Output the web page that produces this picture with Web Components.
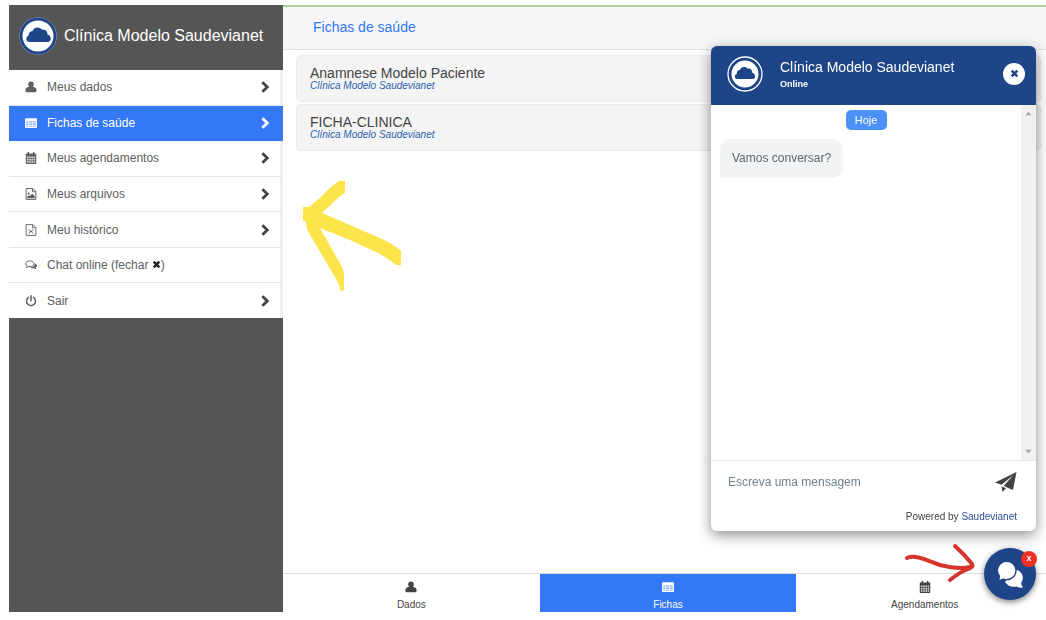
<!DOCTYPE html>
<html lang="pt-BR">
<head>
<meta charset="utf-8">
<title>Fichas de saúde</title>
<style>
  html { background: #fff; }
  body {
    margin: 0; padding: 5px 0 8px 9px; box-sizing: border-box;
    height: 100vh; overflow: hidden;
    font-family: "Liberation Sans", Arial, sans-serif; color: #606060;
  }
</style>
</head>
<body>
<clinic-app></clinic-app>
<script>
const NAVY = '#1d4588';
const CLOUD = 'M10.500 25C8 25 7 23.600 7 22c0-1.800 1-3 2.500-3.500C9 16 11 14.200 13 14.200 14 12 15.800 10.500 18.300 10.500c2 0 3.200.8 4.200 2 2-.3 3.800.4 4.700 1.800.8 1 .9 2 .8 3 2.200.8 3.500 2.400 3.500 4.200 0 2-1.300 3.500-3.500 3.500z';
const ICONS = {
  user: ['0 0 16 16', '<path d="M8 .5c2.300 0 3.800 1.600 3.800 3.800 0 1.300-.5 2.500-1.300 3.300 2.900.4 5 2 5 4.600 0 1.900-1 2.800-2.300 2.800H2.800C1.500 15 .5 14.100.5 12.200c0-2.600 2.100-4.200 5-4.600-.8-.8-1.300-2-1.300-3.300C4.200 2.100 5.700.5 8 .5z"/>'],
  table: ['0 0 16 16', '<path fill-rule="evenodd" d="M1 1.500h14a1 1 0 0 1 1 1v11a1 1 0 0 1-1 1H1a1 1 0 0 1-1-1v-11a1 1 0 0 1 1-1zM1.500 5.500v2h3v-2zM5.500 5.500v2h4v-2zM10.500 5.500v2h4v-2zM1.500 8.500v2h3v-2zM5.500 8.500v2h4v-2zM10.500 8.500v2h4v-2zM1.500 11.500v1.500h3v-1.500zM5.500 11.500v1.500h4v-1.500zM10.500 11.500v1.500h4v-1.500z" /><path d="M1 5h14v9H1z" opacity=".45"/>'],
  calendar: ['0 0 16 16', '<path fill-rule="evenodd" d="M3.500 0h2v2h5V0h2v2H14a1 1 0 0 1 1 1v12a1 1 0 0 1-1 1H2a1 1 0 0 1-1-1V3a1 1 0 0 1 1-1h1.500zM2.500 6v2h2.200V6zM5.500 6v2h2.200V6zM8.500 6v2h2.200V6zM11.500 6v2h2V6zM2.500 9v2.200h2.200V9zM5.500 9v2.200h2.200V9zM8.500 9v2.200h2.200V9zM11.500 9v2.200h2V9zM2.500 12.200v2h2.200v-2zM5.500 12.200v2h2.200v-2zM8.500 12.200v2h2.200v-2zM11.500 12.200v2h2v-2z"/><path d="M2 5h12v10H2z" opacity=".2"/>'],
  image: ['0 0 16 16', '<path d="M1.500.8h9l4 4v10.400h-13zM10 1v4h4" fill="none" stroke="currentColor" stroke-width="1.300"/><circle cx="5" cy="7.500" r="1.400"/><path d="M3 13.500v-2l2-2 1.300 1.300 3.300-3.300 3.400 3v3z"/>'],
  file: ['0 0 16 16', '<path d="M1.500.8h9l4 4v10.400h-13zM10 1v4h4" fill="none" stroke="currentColor" stroke-width="1.200"/><path d="M5 7l2.500 3L5 13M11 7l-2.500 3 2.500 3M6.500 10h3" fill="none" stroke="currentColor" stroke-width="1.200"/>'],
  chats: ['0 0 16 16', '<path d="M6.500 2.500c3 0 5.400 1.600 5.400 3.800S9.500 10 6.500 10c-.6 0-1 0-1.500-.1-1 .7-2 1.100-3.300 1.200.6-.6 1-1.200 1.100-2C1.600 8.400.900 7.400.900 6.300c0-2.200 2.600-3.800 5.600-3.800z" fill="none" stroke="currentColor" stroke-width="1.300"/><path d="M13.200 5.500c1.600.7 2.800 1.900 2.800 3.300 0 1.200-.8 2.200-1.900 2.800.1.800.5 1.400 1.100 2-1.300-.1-2.400-.6-3.300-1.200-2.100.3-4.200-.1-5.600-1.200 3.700 0 6.900-1.800 6.900-5.700z"/>'],
  power: ['0 0 16 16', '<path d="M4.700 3.200a6 6 0 1 0 6.600 0M8 1v6.500" fill="none" stroke="currentColor" stroke-width="2" stroke-linecap="round"/>'],
  chevron: ['0 0 16 16', '<path d="M4.500 1.700L11 8l-6.500 6.300" fill="none" stroke="currentColor" stroke-width="3.800"/>'],
  cross: ['0 0 16 16', '<path d="M3 3l10 10M13 3L3 13" fill="none" stroke="currentColor" stroke-width="4.500"/>'],
  up: ['0 0 16 16', '<path d="M1 12l7-8 7 8z"/>'],
  down: ['0 0 16 16', '<path d="M1 4l7 8 7-8z"/>'],
  plane: ['0 0 22 20', '<path d="M21.500 0L18 18l-5-2-4.300-2.200L18.500 3 6.500 12.800 0 10.500zM6.500 14.200l4.500 2L7.500 20z"/>'],
  comments: ['0 0 27 27', `<path d="M18 8.500c4.500.6 7.800 4 7.800 8.200 0 2-.6 3.700-1.600 5.100.2 2 .8 3.500 1.800 4.900-2.500.1-4.700-.3-6.500-1.300-4.500 1.200-9.500-.6-11.500-4.600z"/><path d="M9.700.3c5.200 0 9.400 4 9.400 9.200s-4.200 9.200-9.400 9.200c-1.200 0-2.400-.2-3.400-.6-1.700 1-3.500 1.400-5.500 1.400 1-1.500 1.500-2.900 1.500-4.600C1 13.300.3 11.500.3 9.500.3 4.300 4.500.3 9.700.3z" stroke="${NAVY}" stroke-width="1.500"/>`],
  logo: ['0 0 38 38', `<circle cx="19" cy="19" r="18.800" fill="#8398ba"/><circle cx="19" cy="19" r="18.300" fill="${NAVY}"/><circle cx="19" cy="19" r="15.500" fill="#fff"/><path d="${CLOUD}" transform="translate(.3 0)" fill="${NAVY}"/>`],
  logoring: ['0 0 38 38', `<circle cx="19" cy="19" r="17" fill="${NAVY}" stroke="#fff" stroke-width="1.300"/><circle cx="19" cy="19" r="13.500" fill="#fff"/><path d="${CLOUD}" transform="translate(3 3.300) scale(.83)" fill="${NAVY}"/>`],
};

/* Base class: renders the subclass markup into an open shadow root. */
class Base extends HTMLElement {
  connectedCallback() {
    if (this.shadowRoot) return;
    const t = document.createElement('template');
    t.innerHTML = `<style>*{box-sizing:border-box} a{color:inherit;text-decoration:none} button{border:0;padding:0;cursor:pointer;font:inherit}</style>${this.render()}`;
    this.attachShadow({ mode: 'open' }).append(t.content.cloneNode(true));
  }
}

class AppIcon extends Base {
  render() {
    const [box, body] = ICONS[this.getAttribute('name')];
    return `<style>:host{display:inline-block;width:12px;height:12px;flex:none}
      svg{display:block;width:100%;height:100%;fill:currentColor}</style>
      <svg viewBox="${box}" aria-hidden="true">${body}</svg>`;
  }
}

class MenuItem extends Base {
  render() {
    return `<style>
      :host{display:block;flex:1;background:#fff;color:#606060;border-bottom:1px solid #e4e4e4;border-right:3px solid #efefef;font-size:12px}
      :host(:last-child){border-bottom:0}
      :host([active]){background:#3478f6;color:#fff;border-color:#3478f6}
      a{display:flex;align-items:center;height:100%;padding:0 9px 0 16px}
      .label{flex:1;padding-left:10px}
      .go{color:#444} :host([active]) .go{color:#fff}
    </style>
    <a href="#"><app-icon name="${this.getAttribute('icon')}"></app-icon>
      <span class="label"><slot></slot></span>
      ${this.hasAttribute('plain') ? '' : '<app-icon class="go" name="chevron"></app-icon>'}</a>`;
  }
}

class SideBar extends Base {
  render() {
    return `<style>
      :host{display:flex;flex-direction:column;width:274px;flex:none;background:#555}
      header{display:flex;align-items:center;gap:7px;height:65px;padding:0 0 3px 10px;color:#fff;font-size:16px;white-space:nowrap}
      header app-icon{width:38px;height:38px}
      nav{display:flex;flex-direction:column;height:248px}
      .x{width:9px;height:9px;color:#222}
    </style>
    <header><app-icon name="logo"></app-icon><span>Clínica Modelo Saudevianet</span></header>
    <nav>
      <menu-item icon="user">Meus dados</menu-item>
      <menu-item icon="table" active>Fichas de saúde</menu-item>
      <menu-item icon="calendar">Meus agendamentos</menu-item>
      <menu-item icon="image">Meus arquivos</menu-item>
      <menu-item icon="file">Meu histórico</menu-item>
      <menu-item icon="chats" plain>Chat online (fechar <app-icon class="x" name="cross"></app-icon>)</menu-item>
      <menu-item icon="power">Sair</menu-item>
    </nav>`;
  }
}

class RecordCard extends Base {
  render() {
    return `<style>
      :host{display:block;background:#f4f4f4;border:1px solid #ececec;border-radius:5px}
      a{display:block;height:45px;padding:10px 13px}
      b{display:block;font-weight:400;font-size:14px;line-height:15px;color:#444}
      i{display:block;font-size:10px;line-height:10px;color:#2a62ad}
    </style>
    <a href="#"><b><slot></slot></b><i><slot name="clinic"></slot></i></a>`;
  }
}

class TabItem extends Base {
  render() {
    return `<style>
      :host{display:block;flex:1;color:#444;font-size:10px}
      :host([active]){background:#3478f6;color:#fff}
      a{display:flex;flex-direction:column;align-items:center;gap:6px;padding-top:7px;line-height:12px}
    </style>
    <a href="#"><app-icon name="${this.getAttribute('icon')}"></app-icon><slot></slot></a>`;
  }
}

class MainPane extends Base {
  render() {
    return `<style>
      :host{display:flex;flex-direction:column;flex:1;min-width:0;overflow:hidden;background:#fff;border-top:2px solid #add3a6}
      h1{margin:0;height:43px;padding:0 30px;background:#f7f7f7;border-bottom:1px solid #dedede;font-size:14px;font-weight:400;line-height:40px;color:#3478f6}
      section{flex:1;display:flex;flex-direction:column;gap:2px;padding:5px 5px 0 13px}
      nav{display:flex;height:39px;margin-right:-7px;border-top:1px solid #dedede}
    </style>
    <h1>Fichas de saúde</h1>
    <section>
      <record-card>Anamnese Modelo Paciente<span slot="clinic">Clínica Modelo Saudevianet</span></record-card>
      <record-card>FICHA-CLINICA<span slot="clinic">Clínica Modelo Saudevianet</span></record-card>
    </section>
    <nav>
      <tab-item icon="user">Dados</tab-item>
      <tab-item icon="table" active>Fichas</tab-item>
      <tab-item icon="calendar">Agendamentos</tab-item>
    </nav>`;
  }
}

class ChatPanel extends Base {
  render() {
    return `<style>
      :host{position:fixed;right:10px;bottom:89px;width:325px;display:flex;flex-direction:column;background:#fff;border-radius:6px;overflow:hidden;box-shadow:0 4px 14px rgba(0,0,0,.45)}
      header{display:flex;align-items:center;height:59px;padding:0 11px 4px 15px;background:${NAVY};color:#fff}
      .logo{width:38px;height:38px}
      .who{flex:1;padding-left:16px}
      .who strong{display:block;font-weight:400;font-size:14px;line-height:20px}
      .who small{display:block;font-size:9px;font-weight:700;line-height:14px}
      .close{display:flex;align-items:center;justify-content:center;width:22px;height:22px;border-radius:50%;background:#fff;color:${NAVY}}
      .close app-icon{width:9px;height:9px}
      .log{display:flex;height:355px}
      .msgs{flex:1;padding:5px 9px}
      .day{display:block;width:41px;margin:0 auto;border-radius:5px;background:#4b91f7;color:#fff;font-size:11px;line-height:20px;text-align:center}
      p{width:max-content;margin:9px 0 0;padding:0 12px;border-radius:10px 10px 10px 0;background:#f1f3f5;color:#5b6770;font-size:12px;line-height:39px}
      .bar{display:flex;flex-direction:column;justify-content:space-between;align-items:center;width:15px;padding:5px 0;background:#f1f1f1;color:#a3a3a3}
      .bar app-icon{width:7px;height:7px}
      form{display:flex;align-items:center;height:42px;padding:0 19px 0 17px;border-top:1px solid #e8e8e8}
      input{flex:1;min-width:0;border:0;padding:0;outline:0;background:none;font:12px "Liberation Sans",Arial,sans-serif}
      input::placeholder{color:#6c7f8a;opacity:1}
      form button{background:none;color:#444} form app-icon{display:block;width:22px;height:20px}
      footer{height:29px;padding-right:19px;text-align:right;font-size:10px;line-height:30px;color:#444}
      footer a{color:#2d4f94}
    </style>
    <header><app-icon class="logo" name="logoring"></app-icon>
      <div class="who"><strong>Clínica Modelo Saudevianet</strong><small>Online</small></div>
      <button class="close" type="button" aria-label="Fechar"><app-icon name="cross"></app-icon></button></header>
    <div class="log"><div class="msgs"><span class="day">Hoje</span><p>Vamos conversar?</p></div>
      <div class="bar"><app-icon name="up"></app-icon><app-icon name="down"></app-icon></div></div>
    <form><input type="text" aria-label="Mensagem" placeholder="Escreva uma mensagem">
      <button type="button" aria-label="Enviar"><app-icon name="plane"></app-icon></button></form>
    <footer>Powered by <a href="#">Saudevianet</a></footer>`;
  }
}

class ChatButton extends Base {
  render() {
    return `<style>
      :host{position:fixed;right:10px;bottom:20px;display:block}
      button{display:flex;align-items:center;justify-content:center;width:52px;height:52px;border-radius:50%;background:${NAVY};color:#fff;box-shadow:0 2px 6px rgba(0,0,0,.5)}
      button app-icon{width:27px;height:27px}
      .badge{position:absolute;top:3px;right:-1px;width:16px;height:16px;border-radius:50%;background:#ee3124;color:#fff;font-size:9px;font-weight:700;line-height:15px;text-align:center}
    </style>
    <button type="button" aria-label="Abrir chat"><app-icon name="comments"></app-icon></button>
    <span class="badge"><slot></slot></span>`;
  }
}

/* Hand-drawn pointers lying over the page. */
class PenMarks extends Base {
  render() {
    return `<style>:host{display:contents} svg{position:fixed;pointer-events:none}
      .menu{left:300px;top:178px} .chat{right:70px;bottom:32px}</style>
    <svg class="menu" width="104" height="116" aria-hidden="true"><path fill="#fce54b" d="M39 3Q42 2 45 3V15Q41 17 39 19L22 35 50 47 82 61Q93 66 101 73V87H96Q88 80 78 75L50 62 20 50 42 89Q44 93 44 97V112Q42 114 40 112 40 108 36 101L9 55Q6 50 6 43H3V29H9L22 18Q31 8 39 3z"/></svg>
    <svg class="chat" width="76" height="48" aria-hidden="true"><path fill="none" stroke="#d6342c" stroke-width="4" stroke-linecap="round" stroke-linejoin="round" d="M7 18C16 14 28 21 40 25 52 28 62 29 70 27M55 6Q65 15 72 24 74 27 68 29 60 32 50 40"/></svg>`;
  }
}

class ClinicApp extends Base {
  render() {
    return `<style>:host{display:flex;height:100%}</style>
    <side-bar></side-bar><main-pane></main-pane>
    <chat-panel></chat-panel><chat-button>x</chat-button><pen-marks></pen-marks>`;
  }
}

Object.entries({
  'app-icon': AppIcon, 'menu-item': MenuItem, 'side-bar': SideBar, 'record-card': RecordCard,
  'tab-item': TabItem, 'main-pane': MainPane, 'chat-panel': ChatPanel, 'chat-button': ChatButton,
  'pen-marks': PenMarks, 'clinic-app': ClinicApp,
}).forEach(([n, c]) => customElements.define(n, c));
</script>
</body>
</html>
